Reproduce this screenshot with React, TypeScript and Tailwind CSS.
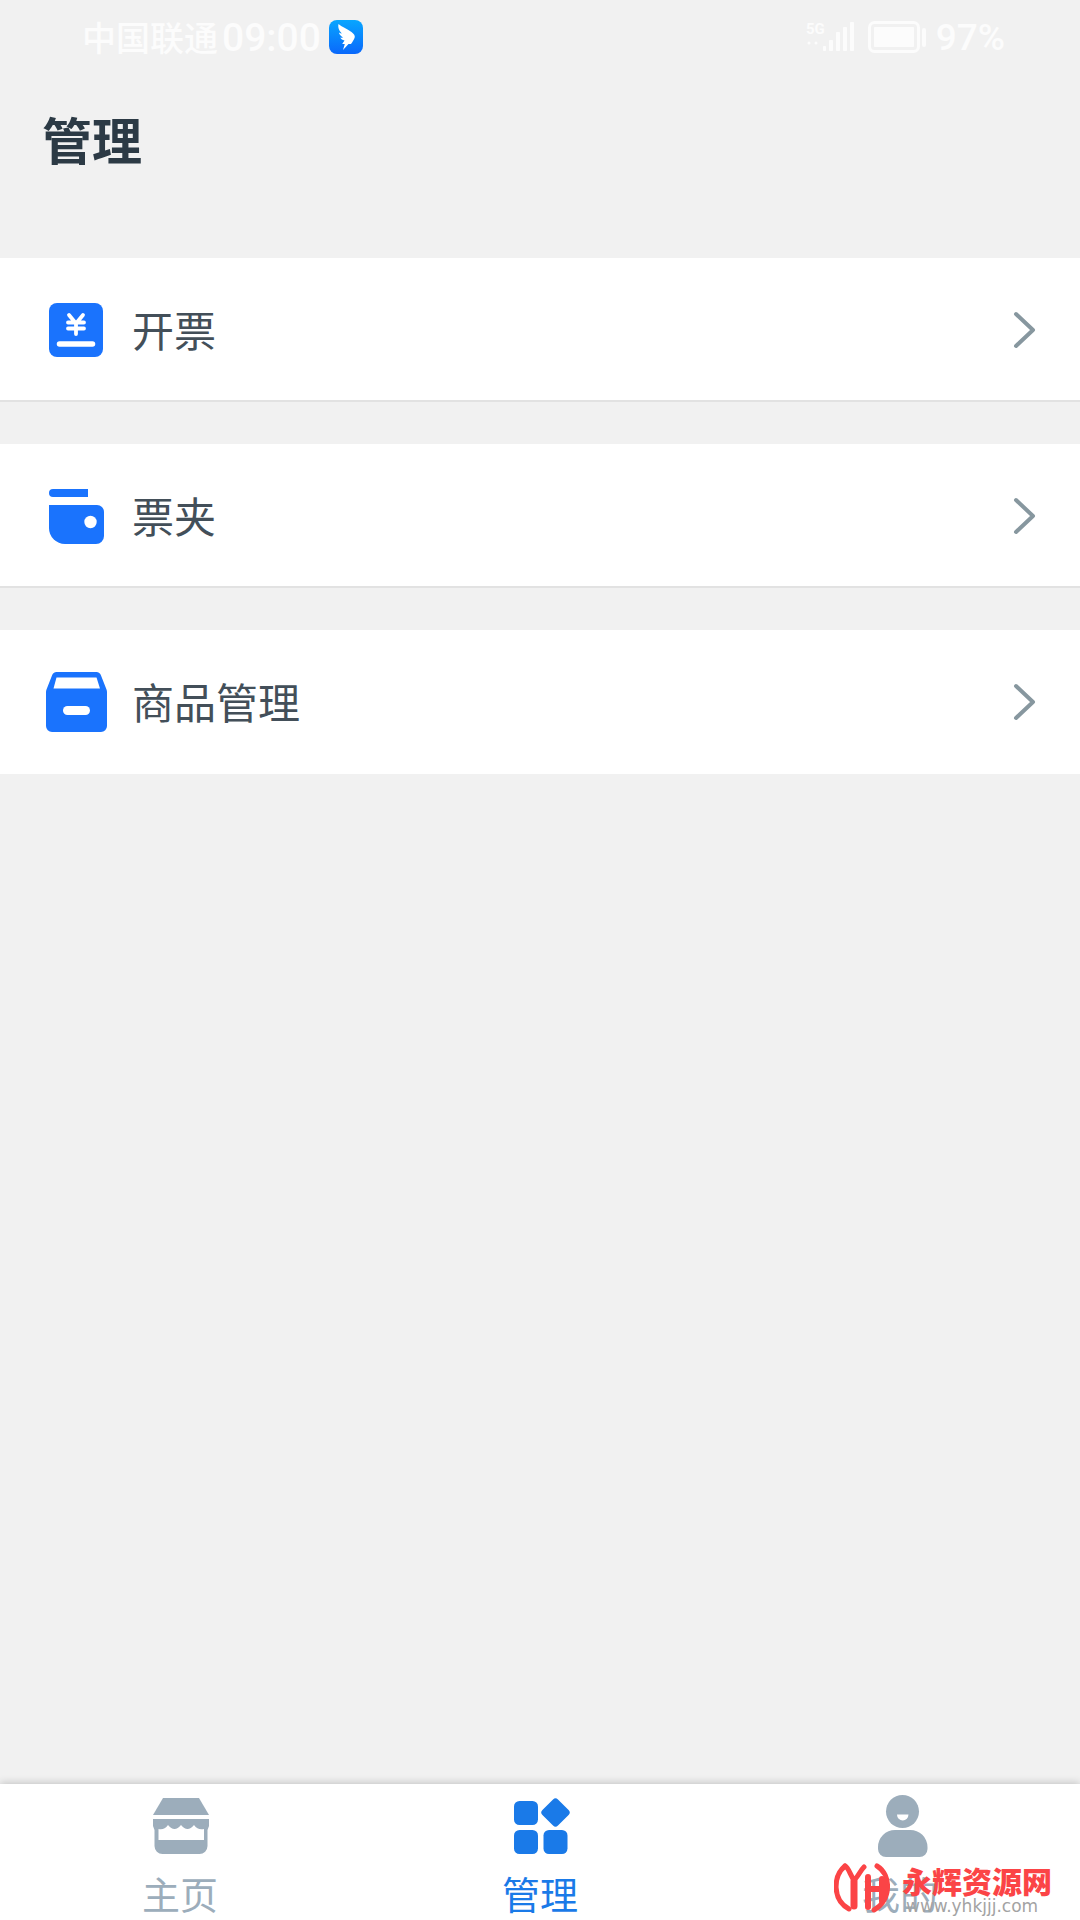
import { useState } from "react";
import type { ReactNode } from "react";

interface MenuItem {
  id: string;
  label: string;
  icon: ReactNode;
}

interface TabItem {
  id: string;
  label: string;
  icon: ReactNode;
}

function InvoiceIcon() {
  return (
    <svg viewBox="0 0 64 64" className="size-16 shrink-0" aria-hidden="true">
      <rect x="5" y="6" width="54" height="54" rx="8" fill="#1a73fd" />
      <g fill="none" stroke="#fff" strokeLinecap="round">
        <path d="M25 18l7 8.500 7-8.500M32 27v10M24 25.500h16M24 31.500h16" strokeWidth="3.800" />
        <path d="M15.500 47h33" strokeWidth="5.500" />
      </g>
    </svg>
  );
}

function WalletIcon() {
  return (
    <svg viewBox="0 0 64 64" className="size-16 shrink-0" aria-hidden="true">
      <g fill="#1a73fd">
        <path d="M9 6h35v8H9a4 4 0 0 1 0-8z" />
        <path d="M5 22h48a7 7 0 0 1 7 7v24a8 8 0 0 1-8 8H21A16 16 0 0 1 5 45z" />
      </g>
      <circle cx="46.500" cy="39" r="6.200" fill="#fff" />
    </svg>
  );
}

function GoodsIcon() {
  return (
    <svg viewBox="0 0 64 64" className="size-16 shrink-0" aria-hidden="true">
      <path
        d="M13 3h39a5 5 0 0 1 5 3.500l5.500 14a7 7 0 0 1 .5 3V57a6 6 0 0 1-6 6H8a6 6 0 0 1-6-6V23.500a7 7 0 0 1 .5-3l5.500-14A5 5 0 0 1 13 3z"
        fill="#1a73fd"
      />
      <path d="M12.500 8.500h40L56 19.500H9.500z" fill="#fff" />
      <rect x="19" y="37" width="27" height="9" rx="4.500" fill="#fff" />
    </svg>
  );
}

function HomeIcon() {
  return (
    <svg viewBox="0 0 64 64" className="size-16" fill="currentColor" aria-hidden="true">
      <path d="M15 4h36l10 17H5z" />
      <path
        fillRule="evenodd"
        d="M5 25h56v7l-1.500 4v16a8 8 0 0 1-8 8h-37a8 8 0 0 1-8-8V36L5 32zM10.500 35v11H56V35q-6 1.500-10-4-6.500 8-13 0-6.500 8-13 0-4 5.500-9.500 4z"
      />
    </svg>
  );
}

function ManageIcon() {
  return (
    <svg viewBox="0 0 64 64" className="size-16" fill="currentColor" aria-hidden="true">
      <rect x="6" y="7" width="24" height="24" rx="5.500" />
      <rect x="6" y="36" width="24" height="24" rx="5.500" />
      <rect x="35.500" y="36" width="24" height="24" rx="5.500" />
      <rect x="36.500" y="7.500" width="22" height="22" rx="3.500" transform="rotate(45 47.500 18.500)" />
    </svg>
  );
}

function ProfileIcon() {
  return (
    <svg viewBox="0 0 64 64" className="size-16" aria-hidden="true">
      <circle cx="34.500" cy="17.500" r="16.500" fill="currentColor" />
      <path d="M29 20.500h11.500a5.750 6 0 0 1-11.500 0z" fill="#fff" />
      <path
        d="M27 36h15a17 17 0 0 1 17.500 17v2a8 8 0 0 1-8 8H18a8 8 0 0 1-8-8v-2a17 17 0 0 1 17-17z"
        fill="currentColor"
      />
    </svg>
  );
}

function ChevronIcon() {
  return (
    <svg viewBox="0 0 24 40" className="h-10 w-6 shrink-0" aria-hidden="true">
      <path
        d="M4 5l17 16-17 16"
        fill="none"
        stroke="#87979f"
        strokeWidth="4"
        strokeLinecap="round"
        strokeLinejoin="round"
      />
    </svg>
  );
}

function MessengerBadge() {
  return (
    <svg viewBox="0 0 34 34" className="size-[34px]" aria-hidden="true">
      <defs>
        <linearGradient id="badge" x1="0" y1="0" x2="0" y2="1">
          <stop offset="0" stopColor="#08a6ff" />
          <stop offset="1" stopColor="#0a68fb" />
        </linearGradient>
      </defs>
      <rect width="34" height="34" rx="8" fill="url(#badge)" />
      <path
        d="M9.500 4c3 2.800 8.500 4.800 13 8 2.500 1.800 3.800 3.800 3.200 5.500-.8 2.400-2.200 4.300-3.700 6.500h-2.500l-5.500 6 1.800-6h-2.600l2.300-3.500c-2-.3-3.500-1.500-4.300-3 1 .3 2 .3 3 .1-2.200-1.200-3.900-3-4.300-5 1 .6 2 .9 3 .9-2.500-2.200-4.300-6-3.400-9.500z"
        fill="#fff"
      />
    </svg>
  );
}

function SignalIcon() {
  return (
    <svg viewBox="0 0 50 36" className="h-9 w-[50px]" fill="currentColor" aria-hidden="true">
      <text x="0" y="15" fontSize="15" fontWeight="700" fontFamily="Roboto, sans-serif">
        5G
      </text>
      <circle cx="3" cy="24" r="1.500" />
      <circle cx="10" cy="24" r="1.500" />
      <rect x="17" y="27" width="3" height="5" rx="1" />
      <rect x="23" y="21" width="4" height="11" rx="1" />
      <rect x="30" y="13" width="4" height="19" rx="1" />
      <rect x="37" y="8" width="4" height="24" rx="1" />
      <rect x="44" y="3" width="4" height="29" rx="1" />
    </svg>
  );
}

function BatteryIcon() {
  return (
    <svg viewBox="0 0 60 36" className="h-9 w-[60px]" aria-hidden="true">
      <rect x="1.500" y="3.500" width="49" height="29" rx="5" fill="none" stroke="currentColor" strokeWidth="3" />
      <rect x="6" y="8" width="40" height="20" rx="1" fill="currentColor" />
      <rect x="54" y="9" width="4" height="19" rx="2" fill="currentColor" />
    </svg>
  );
}

function StatusBar() {
  return (
    <div className="flex h-[74px] items-center justify-between pr-[75px] pl-[82px] text-[#fcfcfc]">
      <div className="flex items-center">
        <span className="text-[34px] leading-10 font-medium">中国联通</span>
        <span className="ml-1 pt-0.5 font-[Roboto,sans-serif] text-[39px] leading-10 font-medium">
          09:00
        </span>
        <span className="ml-2">
          <MessengerBadge />
        </span>
      </div>
      <div className="flex items-center">
        <SignalIcon />
        <span className="ml-3">
          <BatteryIcon />
        </span>
        <span className="ml-2 pt-0.5 font-[Roboto,sans-serif] text-[37px] leading-10 font-medium">
          97%
        </span>
      </div>
    </div>
  );
}

function SiteMark() {
  return (
    <div className="pointer-events-none absolute right-[28px] bottom-1.5 flex items-center gap-3">
      <svg viewBox="0 0 56 50" className="h-[50px] w-14" aria-hidden="true">
        <g fill="none" stroke="#fb4446" strokeLinecap="round" strokeLinejoin="round">
          <path d="M11 3C-1 13-2 37 15 46" strokeWidth="5" />
          <path d="M11 3c4 2 5 9 9 14 4-3 6-9 10-13" strokeWidth="5" />
          <path d="M20 18v25" strokeWidth="7" />
          <path d="M34 14v30M34 26h17" strokeWidth="6" />
          <path d="M43 3c15 9 14 35-3 44" strokeWidth="5" />
          <path d="M48 16v22" strokeWidth="6" />
        </g>
      </svg>
      <div className="flex flex-col">
        <span className="text-[30px] leading-9 font-black text-[#fb4446]">永辉资源网</span>
        <span className="pl-1 font-['DejaVu_Sans',sans-serif] text-[17px] leading-4 text-[#a3a3a3]">
          www.yhkjjj.com
        </span>
      </div>
    </div>
  );
}

const menuItems: MenuItem[] = [
  { id: "invoice", label: "开票", icon: <InvoiceIcon /> },
  { id: "wallet", label: "票夹", icon: <WalletIcon /> },
  { id: "goods", label: "商品管理", icon: <GoodsIcon /> },
];

const tabs: TabItem[] = [
  { id: "home", label: "主页", icon: <HomeIcon /> },
  { id: "manage", label: "管理", icon: <ManageIcon /> },
  { id: "me", label: "我的", icon: <ProfileIcon /> },
];

export default function App() {
  const [activeTab, setActiveTab] = useState("manage");

  return (
    <div className="flex min-h-screen flex-col bg-[#f1f1f1] font-['Noto_Sans_CJK_SC','Liberation_Sans',sans-serif]">
      <StatusBar />

      <header className="px-[42px] pt-[30px] pb-[86px]">
        <h1 className="text-[50px] leading-[68px] font-bold text-[#2c3a45]">管理</h1>
      </header>

      <main className="flex-1">
        <ul className="flex flex-col gap-[42px]">
          {menuItems.map((item) => (
            <li key={item.id} className="border-b-2 border-[#e2e2e2] bg-white last:border-white">
              <button
                type="button"
                className="flex h-[142px] w-full items-center px-11 text-left"
              >
                {item.icon}
                <span className="ml-6 flex-1 text-[42px] leading-[60px] text-[#434f59]">
                  {item.label}
                </span>
                <ChevronIcon />
              </button>
            </li>
          ))}
        </ul>
      </main>

      <nav className="relative bg-white shadow-[0_-1px_8px_rgba(0,0,0,0.2)]">
        <div className="grid grid-cols-3">
          {tabs.map((tab) => (
            <button
              key={tab.id}
              type="button"
              aria-current={tab.id === activeTab ? "page" : undefined}
              onClick={() => setActiveTab(tab.id)}
              className={`flex h-[136px] flex-col items-center pt-[10px] ${
                tab.id === activeTab ? "text-[#1a7ae8]" : "text-[#9cadbb]"
              }`}
            >
              {tab.icon}
              <span className="mt-3 text-[38px] leading-[46px]">{tab.label}</span>
            </button>
          ))}
        </div>
        <SiteMark />
      </nav>
    </div>
  );
}
